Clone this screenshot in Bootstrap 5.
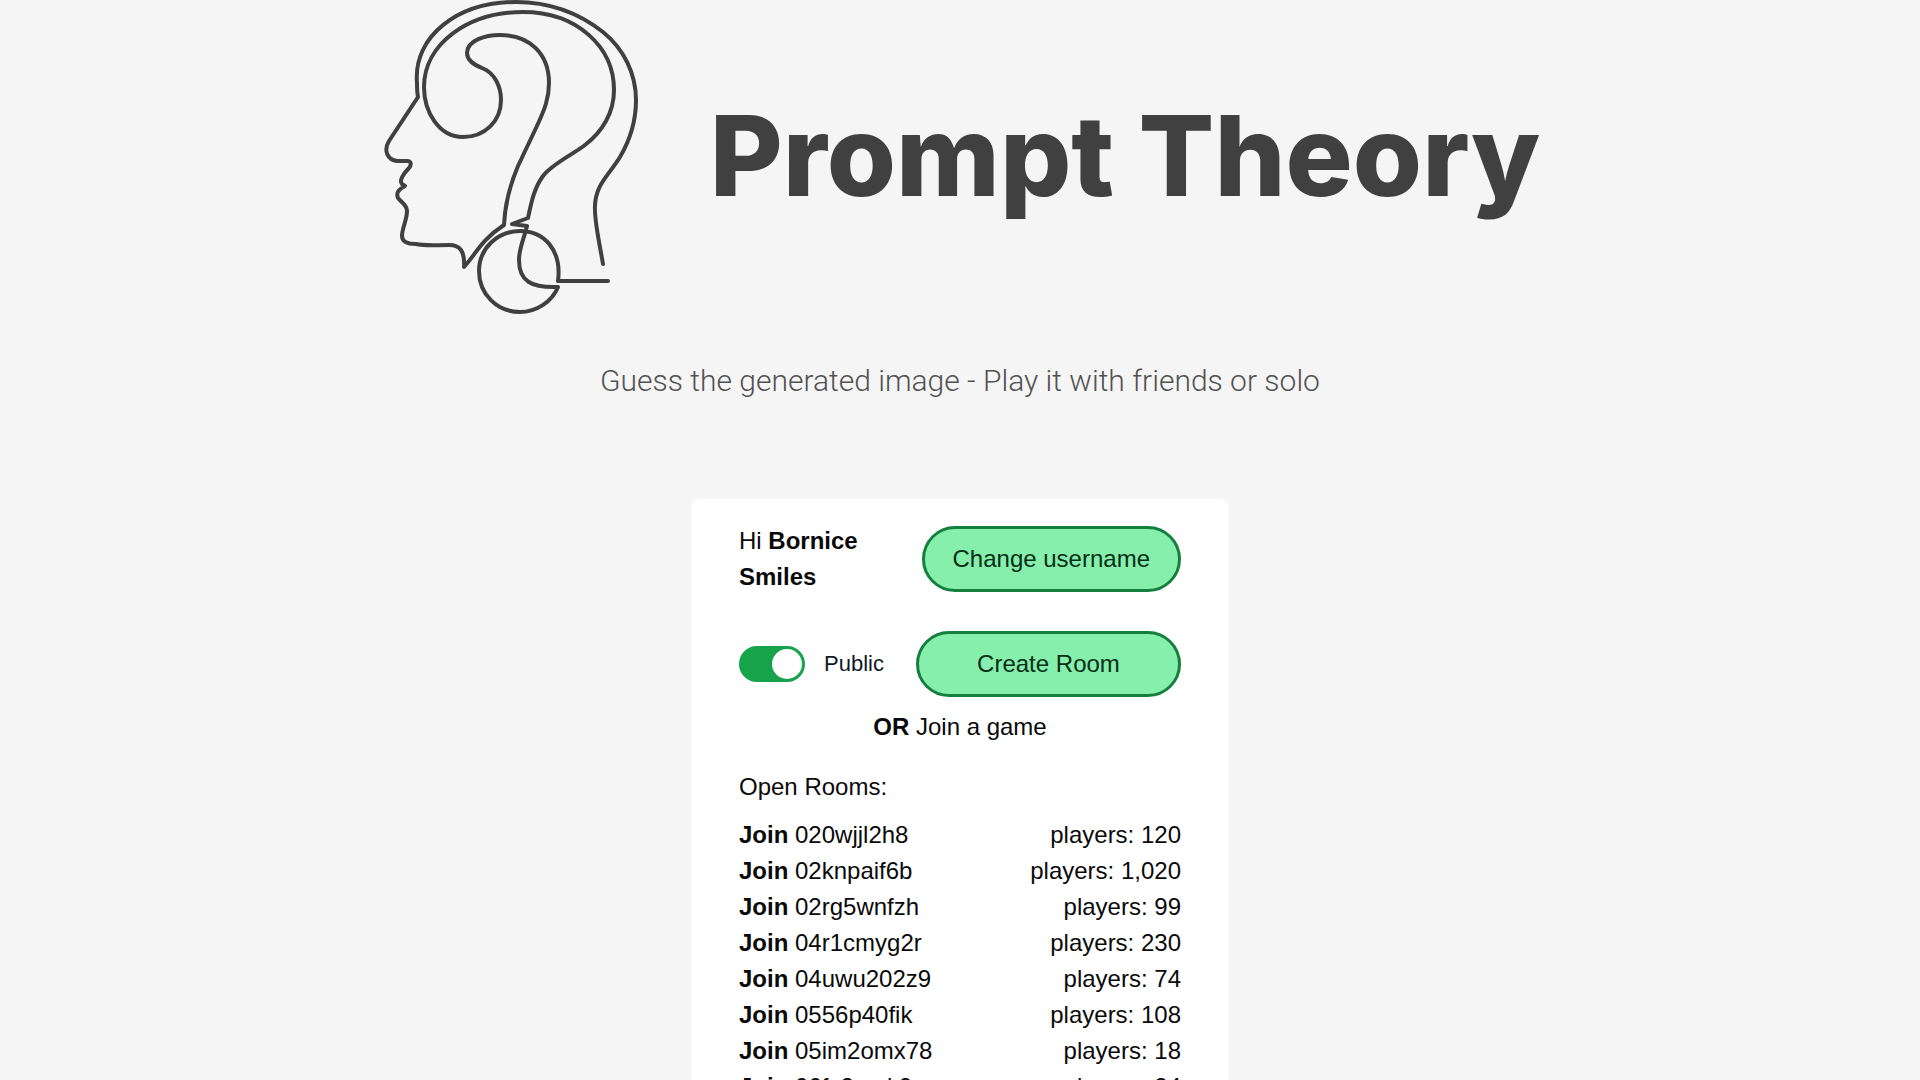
<!DOCTYPE html>
<html lang="en">
<head>
<meta charset="utf-8">
<meta name="viewport" content="width=device-width, initial-scale=1">
<title>Prompt Theory</title>
<link rel="stylesheet" href="https://cdn.jsdelivr.net/npm/bootstrap@5.3.0/dist/css/bootstrap.min.css">
<style>
  body {
    background: #f5f5f5;
    color: #0a0a0a;
    font-family: "Liberation Sans", Arial, sans-serif;
    font-size: 24px;
    line-height: 36px;
  }
  .brand { gap: 74px; }
  .brand-logo { width: 256px; height: 314px; }
  .brand-name {
    color: #404040;
    font-family: Inter, sans-serif;
    font-size: 112px;
    font-weight: 800;
    line-height: 1;
    padding-bottom: 4px;
  }
  .tagline { color: #525252; font-family: Roboto, sans-serif; font-weight: 300; font-size: 30px; margin: 49px 0 100px; }
  .lobby { max-width: 538px; padding: 24px 48px; border: 0; border-radius: 9px; color: inherit; }
  .greeting { max-width: 160px; }
  .btn-lobby {
    --bs-btn-color: #052e16;
    --bs-btn-bg: #86efac;
    --bs-btn-border-color: #15803d;
    --bs-btn-border-width: 3px;
    --bs-btn-padding-y: 12px;
    --bs-btn-padding-x: 28px;
    --bs-btn-font-size: 24px;
    --bs-btn-line-height: 36px;
    --bs-btn-hover-color: #052e16;
    --bs-btn-hover-bg: #4ade80;
    --bs-btn-hover-border-color: #15803d;
  }
  .room-form { gap: 32px; margin-top: 36px; }
  .switch-row { gap: 19px; }
  .form-switch .visibility,
  .form-switch .visibility:checked {
    width: 66px;
    height: 36px;
    margin: 0;
    background-color: #16a34a;
    border: 0;
    background-size: 30px 30px;
    background-position: right 3px center;
    --bs-form-switch-bg: url("data:image/svg+xml,%3csvg xmlns='http://www.w3.org/2000/svg' viewBox='0 0 36 36'%3e%3ccircle r='18' cx='18' cy='18' fill='%23fff'/%3e%3c/svg%3e");
  }
  .form-switch .visibility:not(:checked) { background-color: #9ca3af; background-position: left 3px center; }
  .visibility-label { font-size: 22px; color: #111827; }
  .or-line { margin: 12px 0 24px; }
  .room-list { margin-top: 12px; }
</style>
</head>
<body>
<header class="brand d-flex justify-content-center align-items-center">
  <svg class="brand-logo flex-shrink-0" viewBox="10 0 256 314" overflow="visible" fill="none" stroke="#404040" stroke-width="4" stroke-linecap="round" stroke-linejoin="round" aria-hidden="true">
    <path d="M233 264 C228 235 224 220 225 205 C226 184 239 175 250 157 C260 140 266 122 266 100 C266 74 254 49 233 32 C210 14 180 2 146 2 C88 2 43 36 47 83 C47 88 47 92 48 97 L19 141 C13 151 18 160 27 161 L37 161 C41 161 42 164 39 168 C33 174 29 181 32 184 L35 186 C28 190 26 193 28 198 C32 203 37 205 37 211 C37 220 32 228 32 236 C32 242 38 244 46 244 C54 246 66 245 79 245 C90 245 95 251 94 267 C106 254 111 240 134 225 C135 202 140 185 148 166 L166 128 C175 109 179 98 179 83 C179 54 160 35 130 35 C116 35 97 40 97 53 C97 61 105 65 112 68 C125 73 131 87 131 100 C131 121 115 137 93 137 C69 137 54 112 54 87 C54 44 98 12 153 12 C207 12 244 47 244 90 C244 113 232 132 215 145 C202 155 182 164 173 176 C164 188 161 204 158 218 L142 224 L157 226 C154 239 149 248 149 260 C149 281 161 288 188 287 C182 302 166 312 150 312 C127 312 109 294 109 271 C109 249 127 231 150 231 C174 231 192 250 188 281 L238 281"/>
  </svg>
  <h1 class="brand-name m-0 text-nowrap">Prompt Theory</h1>
</header>
<main class="d-flex flex-column align-items-center">
  <p class="tagline text-center">Guess the generated image - Play it with friends or solo</p>
  <section class="lobby card w-100">
    <div class="d-flex justify-content-between align-items-center">
      <div class="greeting">Hi <strong>Bornice Smiles</strong></div>
      <button type="button" class="btn btn-lobby rounded-pill text-nowrap">Change username</button>
    </div>
    <form class="room-form d-flex align-items-center">
      <div class="switch-row form-check form-switch d-flex align-items-center p-0 m-0">
        <input class="form-check-input visibility" type="checkbox" role="switch" id="public" checked>
        <label class="visibility-label" for="public">Public</label>
      </div>
      <button type="button" class="btn btn-lobby rounded-pill flex-grow-1">Create Room</button>
    </form>
    <p class="or-line text-center"><strong>OR</strong> Join a game</p>
    <p class="m-0">Open Rooms:</p>
    <ul class="room-list list-unstyled mb-0">
      <li class="d-flex justify-content-between"><a class="text-reset text-decoration-none" href="#"><strong>Join</strong> 020wjjl2h8</a><span>players: 120</span></li>
      <li class="d-flex justify-content-between"><a class="text-reset text-decoration-none" href="#"><strong>Join</strong> 02knpaif6b</a><span>players: 1,020</span></li>
      <li class="d-flex justify-content-between"><a class="text-reset text-decoration-none" href="#"><strong>Join</strong> 02rg5wnfzh</a><span>players: 99</span></li>
      <li class="d-flex justify-content-between"><a class="text-reset text-decoration-none" href="#"><strong>Join</strong> 04r1cmyg2r</a><span>players: 230</span></li>
      <li class="d-flex justify-content-between"><a class="text-reset text-decoration-none" href="#"><strong>Join</strong> 04uwu202z9</a><span>players: 74</span></li>
      <li class="d-flex justify-content-between"><a class="text-reset text-decoration-none" href="#"><strong>Join</strong> 0556p40fik</a><span>players: 108</span></li>
      <li class="d-flex justify-content-between"><a class="text-reset text-decoration-none" href="#"><strong>Join</strong> 05im2omx78</a><span>players: 18</span></li>
      <li class="d-flex justify-content-between"><a class="text-reset text-decoration-none" href="#"><strong>Join</strong> 06fs2mnk9</a><span>players: 24</span></li>
    </ul>
  </section>
</main>
<script src="https://cdn.jsdelivr.net/npm/bootstrap@5.3.0/dist/js/bootstrap.bundle.min.js"></script>
</body>
</html>
